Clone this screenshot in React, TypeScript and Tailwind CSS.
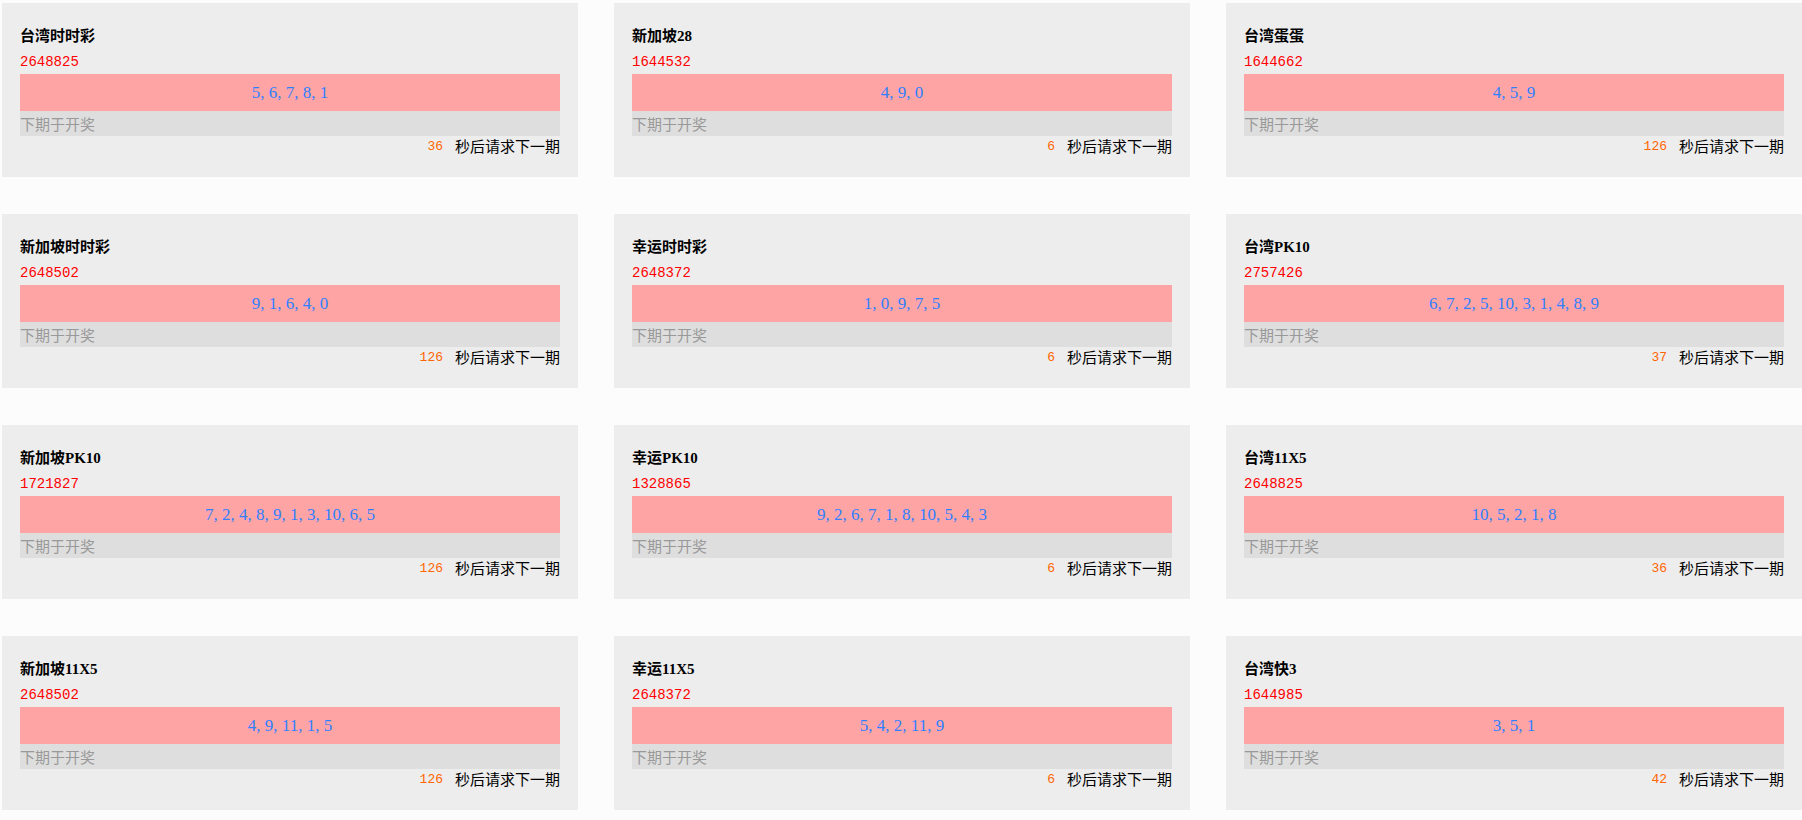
type Lottery = {
  name: string;
  issue: string;
  balls: string;
  seconds: number;
};

const lotteries: Lottery[] = [
  { name: "台湾时时彩", issue: "2648825", balls: "5, 6, 7, 8, 1", seconds: 36 },
  { name: "新加坡28", issue: "1644532", balls: "4, 9, 0", seconds: 6 },
  { name: "台湾蛋蛋", issue: "1644662", balls: "4, 5, 9", seconds: 126 },
  { name: "新加坡时时彩", issue: "2648502", balls: "9, 1, 6, 4, 0", seconds: 126 },
  { name: "幸运时时彩", issue: "2648372", balls: "1, 0, 9, 7, 5", seconds: 6 },
  { name: "台湾PK10", issue: "2757426", balls: "6, 7, 2, 5, 10, 3, 1, 4, 8, 9", seconds: 37 },
  { name: "新加坡PK10", issue: "1721827", balls: "7, 2, 4, 8, 9, 1, 3, 10, 6, 5", seconds: 126 },
  { name: "幸运PK10", issue: "1328865", balls: "9, 2, 6, 7, 1, 8, 10, 5, 4, 3", seconds: 6 },
  { name: "台湾11X5", issue: "2648825", balls: "10, 5, 2, 1, 8", seconds: 36 },
  { name: "新加坡11X5", issue: "2648502", balls: "4, 9, 11, 1, 5", seconds: 126 },
  { name: "幸运11X5", issue: "2648372", balls: "5, 4, 2, 11, 9", seconds: 6 },
  { name: "台湾快3", issue: "1644985", balls: "3, 5, 1", seconds: 42 },
];

const LotteryCard = ({ item }: { item: Lottery }) => {
  return (
    <div className="bg-[#ededed] px-[18px] pt-[20px] pb-[20px]">
      <div className="h-[26px] leading-[26px] text-[15px] font-bold text-black font-['Liberation_Serif','Noto_Sans_CJK_SC',serif]">
        {item.name}
      </div>
      <div className="h-[25px] leading-[27px] text-[14px] text-[#ff0000] font-['Liberation_Mono',monospace]">
        {item.issue}
      </div>
      <div className="h-[37px] leading-[37px] bg-[#ffa4a4] text-center text-[17px] text-[#2f80ff] font-['Liberation_Serif',serif]">
        {item.balls}
      </div>
      <div className="h-[25px] leading-[25px] bg-[#dedede] text-[15px] text-[#999999] font-['Noto_Sans_CJK_SC',sans-serif]">
        下期于开奖
      </div>
      <div className="h-[21px] flex items-center justify-end">
        <span className="mr-[12px] text-[13px] text-[#ff6600] font-['Liberation_Mono',monospace]">
          {item.seconds}
        </span>
        <span className="text-[15px] text-black font-['Noto_Sans_CJK_SC',sans-serif]">
          秒后请求下一期
        </span>
      </div>
    </div>
  );
};

export default function App() {
  return (
    <div className="min-h-[820px] w-full bg-[#fcfcfc] pt-[3px] pl-[2px]">
      <div className="grid grid-cols-3 gap-x-[36px] gap-y-[37px]">
        {lotteries.map((item) => (
          <LotteryCard key={item.name} item={item} />
        ))}
      </div>
    </div>
  );
}
